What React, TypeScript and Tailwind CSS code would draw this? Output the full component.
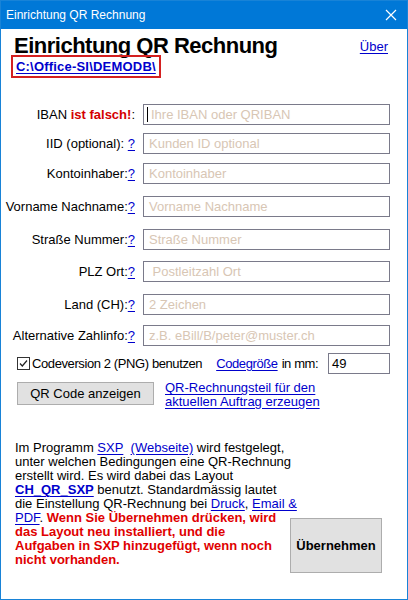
import React from 'react';

type Row = { label: React.ReactNode; help: boolean; placeholder: string; mt: string };

const rows: Row[] = [
    {
        label: (
            <>
                IBAN&nbsp;<span className="font-bold text-[#d40000]">ist falsch!</span>:
            </>
        ),
        help: false,
        placeholder: 'Ihre IBAN oder QRIBAN',
        mt: 'mt-0',
    },
    { label: 'IID (optional):\u00a0', help: true, placeholder: 'Kunden ID optional', mt: 'mt-[8px]' },
    { label: 'Kontoinhaber:', help: true, placeholder: 'Kontoinhaber', mt: 'mt-[9px]' },
    { label: 'Vorname Nachname:', help: true, placeholder: 'Vorname Nachname', mt: 'mt-[12px]' },
    { label: 'Straße Nummer:', help: true, placeholder: 'Straße Nummer', mt: 'mt-[12px]' },
    { label: 'PLZ Ort:', help: true, placeholder: ' Postleitzahl Ort', mt: 'mt-[11px]' },
    { label: 'Land (CH):', help: true, placeholder: '2 Zeichen', mt: 'mt-[12px]' },
    { label: 'Alternative Zahlinfo:', help: true, placeholder: 'z.B. eBill/B/peter@muster.ch', mt: 'mt-[10px]' },
];

const Link: React.FC<{ children: React.ReactNode; className?: string }> = ({ children, className }) => (
    <span className={`text-[#0000cc] underline underline-offset-2 cursor-pointer ${className ?? ''}`}>{children}</span>
);

const App: React.FC = () => {
    return (
        <div
            className="w-[408px] h-[600px] bg-white flex flex-col border border-[#1883d7] overflow-hidden text-[13px] text-black"
            style={{ fontFamily: 'Tahoma, "Liberation Sans", Arial, sans-serif' }}
        >
            {/* title bar */}
            <div className="h-[29px] shrink-0 bg-[#0078d7] flex items-center justify-between pl-[6px] pr-[8px] -mx-px -mt-px">
                <span className="text-white text-[12px]">Einrichtung QR Rechnung</span>
                <svg width="12" height="12" viewBox="0 0 12 12" className="mr-[3px]">
                    <path d="M1 1 L11 11 M11 1 L1 11" stroke="white" strokeWidth="1.2" />
                </svg>
            </div>

            <div className="flex-1 flex flex-col pl-[13px] pr-[17px]">
                {/* heading */}
                <div className="flex items-start justify-between mt-[5px] h-[21px]">
                    <h1 className="text-[22px] font-bold leading-[24px] tracking-[-0.5px]">Einrichtung QR Rechnung</h1>
                    <Link className="text-[13px] leading-[16px] mt-[5px] mr-[2px]">Über</Link>
                </div>
                <div className="-ml-[3px] self-start border-2 border-[#d42020] px-[3px] h-[23px] flex items-center">
                    <Link className="font-bold text-[13px] tracking-[0.2px]">C:\Office-SI\DEMODB\</Link>
                </div>

                {/* form rows */}
                <div className="flex flex-col mt-[26px]">
                    {rows.map((r, i) => (
                        <div key={i} className={`flex items-center ${r.mt}`}>
                            <div className="w-[121px] shrink-0 flex justify-end whitespace-nowrap">
                                <span>{r.label}</span>
                                {r.help && <Link>?</Link>}
                            </div>
                            <div className="ml-[8px] flex-1 h-[21px] border border-[#7a7a8a] flex items-center pl-[5px] text-[#d8c6b4]">
                                {i === 0 && <span className="w-px h-[15px] bg-black mr-[3px] -ml-[2px]"></span>}
                                <span className="whitespace-pre">{r.placeholder}</span>
                            </div>
                        </div>
                    ))}
                </div>

                {/* code options */}
                <div className="flex items-center mt-[7px] pl-[3px] whitespace-nowrap tracking-[-0.4px]">
                    <div className="w-[13px] h-[13px] shrink-0 border border-[#333] flex items-center justify-center">
                        <svg width="11" height="11" viewBox="0 0 11 11">
                            <path d="M2 5.5 L4.3 8 L9 2.5" stroke="#222" strokeWidth="1.2" fill="none" />
                        </svg>
                    </div>
                    <span className="ml-[2px]">Codeversion 2 (PNG) benutzen</span>
                    <Link className="ml-[14px]">Codegröße</Link>
                    <span className="ml-[4px]">in mm:</span>
                    <div className="ml-auto w-[62px] shrink-0 h-[21px] border border-[#7a7a8a] flex items-center pl-[3px] tracking-normal">
                        49
                    </div>
                </div>

                <div className="flex items-start mt-[8px] pl-[3px]">
                    <button className="w-[137px] h-[23px] bg-[#e1e1e1] border border-[#adadad] text-[13px]">
                        QR Code anzeigen
                    </button>
                    <div className="ml-[11px] leading-[14px] -mt-[1px]">
                        <Link>QR-Rechnungsteil für den</Link>
                        <br />
                        <Link>aktuellen Auftrag erzeugen</Link>
                    </div>
                </div>

                {/* info + apply */}
                <div className="flex items-start mt-[32px] pl-px">
                    <p className="w-[270px] text-[13px] leading-[14px] whitespace-nowrap">
                        Im Programm <Link>SXP</Link>&nbsp; <Link>(Webseite)</Link> wird festgelegt,
                        <br />
                        unter welchen Bedingungen eine QR-Rechnung
                        <br />
                        erstellt wird. Es wird dabei das Layout
                        <br />
                        <Link className="font-bold">CH_QR_SXP</Link> benutzt. Standardmässig lautet
                        <br />
                        die Einstellung QR-Rechnung bei <Link>Druck</Link>, <Link>Email &amp; </Link>
                        <br />
                        <Link>PDF</Link>.{' '}
                        <span className="font-bold text-[#e00000]">
                            Wenn Sie Übernehmen drücken, wird
                            <br />
                            das Layout neu installiert, und die
                            <br />
                            Aufgaben in SXP hinzugefügt, wenn noch
                            <br />
                            nicht vorhanden.
                        </span>
                    </p>
                    <button className="ml-auto mr-[8px] mt-[77px] w-[92px] h-[55px] bg-[#e1e1e1] border border-[#adadad] font-bold text-[13px]">
                        Übernehmen
                    </button>
                </div>
            </div>
        </div>
    );
};

export default App;
